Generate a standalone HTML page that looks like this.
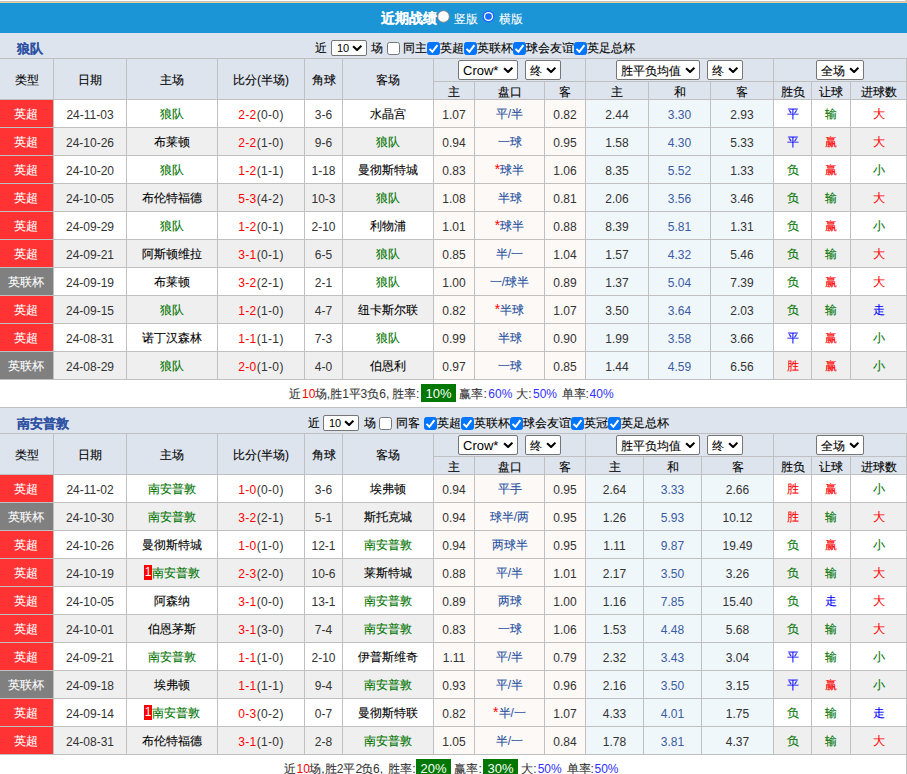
<!DOCTYPE html><html><head><meta charset="utf-8"><style>
*{margin:0;padding:0;box-sizing:border-box}
html,body{width:907px;height:774px;overflow:hidden;background:#fff}
body{position:relative;font-family:"Liberation Sans",sans-serif;font-size:12px;color:#333}
.r{position:absolute}
.c{position:absolute;display:flex;align-items:center;justify-content:center;white-space:nowrap;line-height:14px}
.sel{position:absolute;background:#fff;border:1px solid #767676;border-radius:2px;font-size:12px;color:#000}
.sel>span{position:absolute;left:4px;top:1px;height:18px;line-height:18px;white-space:nowrap}
.sel .chev{position:absolute;right:4px;top:5px}
.team{position:absolute;left:17px;height:25px;line-height:25px;font-weight:bold;font-size:13px;color:#2f52a4}
.opts{position:absolute;height:25px;line-height:25px;white-space:nowrap;font-size:12px;color:#333}
.ot{position:absolute;height:25px;line-height:25px;white-space:nowrap;font-size:12px;color:#000}
.nsel{position:absolute;width:36px;height:16px;border:1px solid #767676;border-radius:2px;background:#fff;line-height:14px;padding-left:5px;color:#000;font-size:11px}
.nsel .chev{position:absolute;right:4px;top:3px}
.cb{position:absolute;width:13px;height:13px;border:1px solid #767676;border-radius:2.5px;background:#fff}
.cb.on{background:#0075ff;border-color:#0075ff}
.cb svg{position:absolute;left:-1px;top:-1px}
.title{position:absolute;top:3px;height:30px;line-height:30px;color:#fff;font-weight:bold;font-size:14px;white-space:nowrap}
.tt{position:absolute;top:4px;height:30px;line-height:30px;color:#fff;font-size:12px;white-space:nowrap}
.rad{position:absolute}
.bd{display:inline-block;background:#ff0000;color:#fff;width:8px;height:15px;line-height:15px;text-align:center;font-weight:normal;font-size:12px}
.star{color:#ff0000;font-size:14px;position:relative;top:-1px}
.sum{position:absolute;height:27px;line-height:27px;white-space:nowrap;padding-top:1px}
.gb{position:absolute;background:#007700;color:#fff;width:35px;height:18px;line-height:18px;padding-top:1px;text-align:center;font-size:13px}
.rd{color:#ff0000}
.bl{color:#3030ff}
.k{-webkit-text-stroke:0.1px currentColor}
</style></head><body><div class="r" style="left:0px;top:1px;width:907px;height:1px;background:#c4c4c4"></div><div class="r" style="left:0px;top:2px;width:907px;height:1px;background:#e8ce98"></div><div class="r" style="left:0px;top:3px;width:907px;height:30px;background:#1c95d6"></div><div class="r" style="left:905px;top:0px;width:1px;height:2px;background:#c4c4c4"></div><div class="r" style="left:906px;top:0px;width:1px;height:3px;background:#e8ce98"></div><div class="title" style="left:381px"><span class="k">近期战绩</span></div><svg class="rad" style="left:437px;top:10px" width="13" height="13" viewBox="0 0 13 13"><circle cx="6.5" cy="6.5" r="5.8" fill="#fff" stroke="#8a8a8a" stroke-width="1"/></svg><div class="tt" style="left:454px"><span class="k">竖版</span></div><svg class="rad" style="left:482px;top:10px" width="13" height="13" viewBox="0 0 13 13"><circle cx="6.5" cy="6.5" r="6" fill="#1a6cff"/><circle cx="6.5" cy="6.5" r="4.6" fill="#fff"/><circle cx="6.5" cy="6.5" r="3.3" fill="#1a6cff"/></svg><div class="tt" style="left:499px"><span class="k">横版</span></div><div class="r" style="left:0px;top:33px;width:907px;height:25px;background:#dde4ed"></div><div class="team" style="top:36px"><span class="k">狼队</span></div><div class="ot" style="left:314.5px;top:36px"><span class="k">近</span></div><div class="nsel" style="left:331px;top:40px"><span>10</span><svg class="chev" width="10" height="7" viewBox="0 0 10 7"><path d="M1.1 2.2 L5.1 6 L9.4 1.7" fill="none" stroke="#000" stroke-width="2.1"/></svg></div><div class="ot" style="left:370.5px;top:36px"><span class="k">场</span></div><i style="left:387px;top:42px" class="cb"></i><div class="ot" style="left:403px;top:36px"><span class="k">同主</span></div><i style="left:427px;top:42px" class="cb on"><svg width="13" height="13" viewBox="0 0 13 13"><path d="M2.5 6.9 L5.4 9.8 L10.4 3.2" fill="none" stroke="#fff" stroke-width="2"/></svg></i><div class="ot" style="left:440px;top:36px"><span class="k">英超</span></div><i style="left:464px;top:42px" class="cb on"><svg width="13" height="13" viewBox="0 0 13 13"><path d="M2.5 6.9 L5.4 9.8 L10.4 3.2" fill="none" stroke="#fff" stroke-width="2"/></svg></i><div class="ot" style="left:477px;top:36px"><span class="k">英联杯</span></div><i style="left:513px;top:42px" class="cb on"><svg width="13" height="13" viewBox="0 0 13 13"><path d="M2.5 6.9 L5.4 9.8 L10.4 3.2" fill="none" stroke="#fff" stroke-width="2"/></svg></i><div class="ot" style="left:526px;top:36px"><span class="k">球会友谊</span></div><i style="left:574px;top:42px" class="cb on"><svg width="13" height="13" viewBox="0 0 13 13"><path d="M2.5 6.9 L5.4 9.8 L10.4 3.2" fill="none" stroke="#fff" stroke-width="2"/></svg></i><div class="ot" style="left:587px;top:36px"><span class="k">英足总杯</span></div><div class="r" style="left:0px;top:59px;width:906px;height:40px;background:#dde4ed"></div><div class="c" style="left:0px;top:59px;width:53px;height:40px;padding-top:2px;color:#000"><span class="k">类型</span></div><div class="c" style="left:54px;top:59px;width:72px;height:40px;padding-top:2px;color:#000"><span class="k">日期</span></div><div class="c" style="left:127px;top:59px;width:90px;height:40px;padding-top:2px;color:#000"><span class="k">主场</span></div><div class="c" style="left:218px;top:59px;width:86px;height:40px;padding-top:2px;color:#000"><span class="k">比分</span>(<span class="k">半场</span>)</div><div class="c" style="left:305px;top:59px;width:37px;height:40px;padding-top:2px;color:#000"><span class="k">角球</span></div><div class="c" style="left:343px;top:59px;width:90px;height:40px;padding-top:2px;color:#000"><span class="k">客场</span></div><div class="c" style="left:434px;top:82px;width:40px;height:17px;padding-top:2px;color:#000"><span class="k">主</span></div><div class="c" style="left:475px;top:82px;width:69px;height:17px;padding-top:2px;color:#000"><span class="k">盘口</span></div><div class="c" style="left:545px;top:82px;width:40px;height:17px;padding-top:2px;color:#000"><span class="k">客</span></div><div class="c" style="left:586px;top:82px;width:62px;height:17px;padding-top:2px;color:#000"><span class="k">主</span></div><div class="c" style="left:649px;top:82px;width:61px;height:17px;padding-top:2px;color:#000"><span class="k">和</span></div><div class="c" style="left:711px;top:82px;width:62px;height:17px;padding-top:2px;color:#000"><span class="k">客</span></div><div class="c" style="left:774px;top:82px;width:37px;height:17px;padding-top:2px;color:#000"><span class="k">胜负</span></div><div class="c" style="left:812px;top:82px;width:38px;height:17px;padding-top:2px;color:#000"><span class="k">让球</span></div><div class="c" style="left:851px;top:82px;width:55px;height:17px;padding-top:2px;color:#000"><span class="k">进球数</span></div><div class="r" style="left:0px;top:100px;width:53px;height:27px;background:#ff3333"></div><div class="c" style="left:-1px;top:100px;width:54px;height:27px;color:#fff"><span class="k">英超</span></div><div class="c" style="left:54px;top:100px;width:72px;height:27px;padding-top:2px">24-11-03</div><div class="c" style="left:127px;top:100px;width:90px;height:27px;"><span style="color:#007400"><span class="k">狼队</span></span></div><div class="c" style="left:218px;top:100px;width:86px;height:27px;padding-top:2px;letter-spacing:0.35px"><span style="color:#ff0000">2-2</span>(0-0)</div><div class="c" style="left:305px;top:100px;width:37px;height:27px;padding-top:2px">3-6</div><div class="c" style="left:343px;top:100px;width:90px;height:27px;"><span style="color:#000000"><span class="k">水晶宫</span></span></div><div class="r" style="left:434px;top:100px;width:40px;height:27px;background:#fdf9f6"></div><div class="c" style="left:434px;top:100px;width:40px;height:27px;padding-top:2px">1.07</div><div class="r" style="left:475px;top:100px;width:69px;height:27px;background:#fdf9f6"></div><div class="c" style="left:475px;top:100px;width:69px;height:27px;color:#1f4f9f"><span class="k">平</span>/<span class="k">半</span></div><div class="r" style="left:545px;top:100px;width:40px;height:27px;background:#fdf9f6"></div><div class="c" style="left:545px;top:100px;width:40px;height:27px;padding-top:2px">0.82</div><div class="r" style="left:586px;top:100px;width:62px;height:27px;background:#f0f7fb"></div><div class="c" style="left:586px;top:100px;width:62px;height:27px;padding-top:2px">2.44</div><div class="r" style="left:649px;top:100px;width:61px;height:27px;background:#f0f7fb"></div><div class="c" style="left:649px;top:100px;width:61px;height:27px;color:#3b5ca4;padding-top:2px">3.30</div><div class="r" style="left:711px;top:100px;width:62px;height:27px;background:#f0f7fb"></div><div class="c" style="left:711px;top:100px;width:62px;height:27px;padding-top:2px">2.93</div><div class="c" style="left:774px;top:100px;width:37px;height:27px;color:#0000ff"><span class="k">平</span></div><div class="c" style="left:812px;top:100px;width:38px;height:27px;color:#007400"><span class="k">输</span></div><div class="c" style="left:851px;top:100px;width:55px;height:27px;color:#ff0000"><span class="k">大</span></div><div class="r" style="left:0px;top:128px;width:53px;height:27px;background:#ff3333"></div><div class="c" style="left:-1px;top:128px;width:54px;height:27px;color:#fff"><span class="k">英超</span></div><div class="r" style="left:54px;top:128px;width:72px;height:27px;background:#efefef"></div><div class="c" style="left:54px;top:128px;width:72px;height:27px;padding-top:2px">24-10-26</div><div class="r" style="left:127px;top:128px;width:90px;height:27px;background:#efefef"></div><div class="c" style="left:127px;top:128px;width:90px;height:27px;"><span style="color:#000000"><span class="k">布莱顿</span></span></div><div class="r" style="left:218px;top:128px;width:86px;height:27px;background:#efefef"></div><div class="c" style="left:218px;top:128px;width:86px;height:27px;padding-top:2px;letter-spacing:0.35px"><span style="color:#ff0000">2-2</span>(1-0)</div><div class="r" style="left:305px;top:128px;width:37px;height:27px;background:#efefef"></div><div class="c" style="left:305px;top:128px;width:37px;height:27px;padding-top:2px">9-6</div><div class="r" style="left:343px;top:128px;width:90px;height:27px;background:#efefef"></div><div class="c" style="left:343px;top:128px;width:90px;height:27px;"><span style="color:#007400"><span class="k">狼队</span></span></div><div class="r" style="left:434px;top:128px;width:40px;height:27px;background:#fdf9f6"></div><div class="c" style="left:434px;top:128px;width:40px;height:27px;padding-top:2px">0.94</div><div class="r" style="left:475px;top:128px;width:69px;height:27px;background:#fdf9f6"></div><div class="c" style="left:475px;top:128px;width:69px;height:27px;color:#1f4f9f"><span class="k">一球</span></div><div class="r" style="left:545px;top:128px;width:40px;height:27px;background:#fdf9f6"></div><div class="c" style="left:545px;top:128px;width:40px;height:27px;padding-top:2px">0.95</div><div class="r" style="left:586px;top:128px;width:62px;height:27px;background:#f0f7fb"></div><div class="c" style="left:586px;top:128px;width:62px;height:27px;padding-top:2px">1.58</div><div class="r" style="left:649px;top:128px;width:61px;height:27px;background:#f0f7fb"></div><div class="c" style="left:649px;top:128px;width:61px;height:27px;color:#3b5ca4;padding-top:2px">4.30</div><div class="r" style="left:711px;top:128px;width:62px;height:27px;background:#f0f7fb"></div><div class="c" style="left:711px;top:128px;width:62px;height:27px;padding-top:2px">5.33</div><div class="r" style="left:774px;top:128px;width:37px;height:27px;background:#efefef"></div><div class="c" style="left:774px;top:128px;width:37px;height:27px;color:#0000ff"><span class="k">平</span></div><div class="r" style="left:812px;top:128px;width:38px;height:27px;background:#efefef"></div><div class="c" style="left:812px;top:128px;width:38px;height:27px;color:#ff0000"><span class="k">赢</span></div><div class="r" style="left:851px;top:128px;width:55px;height:27px;background:#efefef"></div><div class="c" style="left:851px;top:128px;width:55px;height:27px;color:#ff0000"><span class="k">大</span></div><div class="r" style="left:0px;top:156px;width:53px;height:27px;background:#ff3333"></div><div class="c" style="left:-1px;top:156px;width:54px;height:27px;color:#fff"><span class="k">英超</span></div><div class="c" style="left:54px;top:156px;width:72px;height:27px;padding-top:2px">24-10-20</div><div class="c" style="left:127px;top:156px;width:90px;height:27px;"><span style="color:#007400"><span class="k">狼队</span></span></div><div class="c" style="left:218px;top:156px;width:86px;height:27px;padding-top:2px;letter-spacing:0.35px"><span style="color:#ff0000">1-2</span>(1-1)</div><div class="c" style="left:305px;top:156px;width:37px;height:27px;padding-top:2px">1-18</div><div class="c" style="left:343px;top:156px;width:90px;height:27px;"><span style="color:#000000"><span class="k">曼彻斯特城</span></span></div><div class="r" style="left:434px;top:156px;width:40px;height:27px;background:#fdf9f6"></div><div class="c" style="left:434px;top:156px;width:40px;height:27px;padding-top:2px">0.83</div><div class="r" style="left:475px;top:156px;width:69px;height:27px;background:#fdf9f6"></div><div class="c" style="left:475px;top:156px;width:69px;height:27px;color:#1f4f9f"><span class="star">*</span><span class="k">球半</span></div><div class="r" style="left:545px;top:156px;width:40px;height:27px;background:#fdf9f6"></div><div class="c" style="left:545px;top:156px;width:40px;height:27px;padding-top:2px">1.06</div><div class="r" style="left:586px;top:156px;width:62px;height:27px;background:#f0f7fb"></div><div class="c" style="left:586px;top:156px;width:62px;height:27px;padding-top:2px">8.35</div><div class="r" style="left:649px;top:156px;width:61px;height:27px;background:#f0f7fb"></div><div class="c" style="left:649px;top:156px;width:61px;height:27px;color:#3b5ca4;padding-top:2px">5.52</div><div class="r" style="left:711px;top:156px;width:62px;height:27px;background:#f0f7fb"></div><div class="c" style="left:711px;top:156px;width:62px;height:27px;padding-top:2px">1.33</div><div class="c" style="left:774px;top:156px;width:37px;height:27px;color:#007400"><span class="k">负</span></div><div class="c" style="left:812px;top:156px;width:38px;height:27px;color:#ff0000"><span class="k">赢</span></div><div class="c" style="left:851px;top:156px;width:55px;height:27px;color:#007400"><span class="k">小</span></div><div class="r" style="left:0px;top:184px;width:53px;height:27px;background:#ff3333"></div><div class="c" style="left:-1px;top:184px;width:54px;height:27px;color:#fff"><span class="k">英超</span></div><div class="r" style="left:54px;top:184px;width:72px;height:27px;background:#efefef"></div><div class="c" style="left:54px;top:184px;width:72px;height:27px;padding-top:2px">24-10-05</div><div class="r" style="left:127px;top:184px;width:90px;height:27px;background:#efefef"></div><div class="c" style="left:127px;top:184px;width:90px;height:27px;"><span style="color:#000000"><span class="k">布伦特福德</span></span></div><div class="r" style="left:218px;top:184px;width:86px;height:27px;background:#efefef"></div><div class="c" style="left:218px;top:184px;width:86px;height:27px;padding-top:2px;letter-spacing:0.35px"><span style="color:#ff0000">5-3</span>(4-2)</div><div class="r" style="left:305px;top:184px;width:37px;height:27px;background:#efefef"></div><div class="c" style="left:305px;top:184px;width:37px;height:27px;padding-top:2px">10-3</div><div class="r" style="left:343px;top:184px;width:90px;height:27px;background:#efefef"></div><div class="c" style="left:343px;top:184px;width:90px;height:27px;"><span style="color:#007400"><span class="k">狼队</span></span></div><div class="r" style="left:434px;top:184px;width:40px;height:27px;background:#fdf9f6"></div><div class="c" style="left:434px;top:184px;width:40px;height:27px;padding-top:2px">1.08</div><div class="r" style="left:475px;top:184px;width:69px;height:27px;background:#fdf9f6"></div><div class="c" style="left:475px;top:184px;width:69px;height:27px;color:#1f4f9f"><span class="k">半球</span></div><div class="r" style="left:545px;top:184px;width:40px;height:27px;background:#fdf9f6"></div><div class="c" style="left:545px;top:184px;width:40px;height:27px;padding-top:2px">0.81</div><div class="r" style="left:586px;top:184px;width:62px;height:27px;background:#f0f7fb"></div><div class="c" style="left:586px;top:184px;width:62px;height:27px;padding-top:2px">2.06</div><div class="r" style="left:649px;top:184px;width:61px;height:27px;background:#f0f7fb"></div><div class="c" style="left:649px;top:184px;width:61px;height:27px;color:#3b5ca4;padding-top:2px">3.56</div><div class="r" style="left:711px;top:184px;width:62px;height:27px;background:#f0f7fb"></div><div class="c" style="left:711px;top:184px;width:62px;height:27px;padding-top:2px">3.46</div><div class="r" style="left:774px;top:184px;width:37px;height:27px;background:#efefef"></div><div class="c" style="left:774px;top:184px;width:37px;height:27px;color:#007400"><span class="k">负</span></div><div class="r" style="left:812px;top:184px;width:38px;height:27px;background:#efefef"></div><div class="c" style="left:812px;top:184px;width:38px;height:27px;color:#007400"><span class="k">输</span></div><div class="r" style="left:851px;top:184px;width:55px;height:27px;background:#efefef"></div><div class="c" style="left:851px;top:184px;width:55px;height:27px;color:#ff0000"><span class="k">大</span></div><div class="r" style="left:0px;top:212px;width:53px;height:27px;background:#ff3333"></div><div class="c" style="left:-1px;top:212px;width:54px;height:27px;color:#fff"><span class="k">英超</span></div><div class="c" style="left:54px;top:212px;width:72px;height:27px;padding-top:2px">24-09-29</div><div class="c" style="left:127px;top:212px;width:90px;height:27px;"><span style="color:#007400"><span class="k">狼队</span></span></div><div class="c" style="left:218px;top:212px;width:86px;height:27px;padding-top:2px;letter-spacing:0.35px"><span style="color:#ff0000">1-2</span>(0-1)</div><div class="c" style="left:305px;top:212px;width:37px;height:27px;padding-top:2px">2-10</div><div class="c" style="left:343px;top:212px;width:90px;height:27px;"><span style="color:#000000"><span class="k">利物浦</span></span></div><div class="r" style="left:434px;top:212px;width:40px;height:27px;background:#fdf9f6"></div><div class="c" style="left:434px;top:212px;width:40px;height:27px;padding-top:2px">1.01</div><div class="r" style="left:475px;top:212px;width:69px;height:27px;background:#fdf9f6"></div><div class="c" style="left:475px;top:212px;width:69px;height:27px;color:#1f4f9f"><span class="star">*</span><span class="k">球半</span></div><div class="r" style="left:545px;top:212px;width:40px;height:27px;background:#fdf9f6"></div><div class="c" style="left:545px;top:212px;width:40px;height:27px;padding-top:2px">0.88</div><div class="r" style="left:586px;top:212px;width:62px;height:27px;background:#f0f7fb"></div><div class="c" style="left:586px;top:212px;width:62px;height:27px;padding-top:2px">8.39</div><div class="r" style="left:649px;top:212px;width:61px;height:27px;background:#f0f7fb"></div><div class="c" style="left:649px;top:212px;width:61px;height:27px;color:#3b5ca4;padding-top:2px">5.81</div><div class="r" style="left:711px;top:212px;width:62px;height:27px;background:#f0f7fb"></div><div class="c" style="left:711px;top:212px;width:62px;height:27px;padding-top:2px">1.31</div><div class="c" style="left:774px;top:212px;width:37px;height:27px;color:#007400"><span class="k">负</span></div><div class="c" style="left:812px;top:212px;width:38px;height:27px;color:#ff0000"><span class="k">赢</span></div><div class="c" style="left:851px;top:212px;width:55px;height:27px;color:#007400"><span class="k">小</span></div><div class="r" style="left:0px;top:240px;width:53px;height:27px;background:#ff3333"></div><div class="c" style="left:-1px;top:240px;width:54px;height:27px;color:#fff"><span class="k">英超</span></div><div class="r" style="left:54px;top:240px;width:72px;height:27px;background:#efefef"></div><div class="c" style="left:54px;top:240px;width:72px;height:27px;padding-top:2px">24-09-21</div><div class="r" style="left:127px;top:240px;width:90px;height:27px;background:#efefef"></div><div class="c" style="left:127px;top:240px;width:90px;height:27px;"><span style="color:#000000"><span class="k">阿斯顿维拉</span></span></div><div class="r" style="left:218px;top:240px;width:86px;height:27px;background:#efefef"></div><div class="c" style="left:218px;top:240px;width:86px;height:27px;padding-top:2px;letter-spacing:0.35px"><span style="color:#ff0000">3-1</span>(0-1)</div><div class="r" style="left:305px;top:240px;width:37px;height:27px;background:#efefef"></div><div class="c" style="left:305px;top:240px;width:37px;height:27px;padding-top:2px">6-5</div><div class="r" style="left:343px;top:240px;width:90px;height:27px;background:#efefef"></div><div class="c" style="left:343px;top:240px;width:90px;height:27px;"><span style="color:#007400"><span class="k">狼队</span></span></div><div class="r" style="left:434px;top:240px;width:40px;height:27px;background:#fdf9f6"></div><div class="c" style="left:434px;top:240px;width:40px;height:27px;padding-top:2px">0.85</div><div class="r" style="left:475px;top:240px;width:69px;height:27px;background:#fdf9f6"></div><div class="c" style="left:475px;top:240px;width:69px;height:27px;color:#1f4f9f"><span class="k">半</span>/<span class="k">一</span></div><div class="r" style="left:545px;top:240px;width:40px;height:27px;background:#fdf9f6"></div><div class="c" style="left:545px;top:240px;width:40px;height:27px;padding-top:2px">1.04</div><div class="r" style="left:586px;top:240px;width:62px;height:27px;background:#f0f7fb"></div><div class="c" style="left:586px;top:240px;width:62px;height:27px;padding-top:2px">1.57</div><div class="r" style="left:649px;top:240px;width:61px;height:27px;background:#f0f7fb"></div><div class="c" style="left:649px;top:240px;width:61px;height:27px;color:#3b5ca4;padding-top:2px">4.32</div><div class="r" style="left:711px;top:240px;width:62px;height:27px;background:#f0f7fb"></div><div class="c" style="left:711px;top:240px;width:62px;height:27px;padding-top:2px">5.46</div><div class="r" style="left:774px;top:240px;width:37px;height:27px;background:#efefef"></div><div class="c" style="left:774px;top:240px;width:37px;height:27px;color:#007400"><span class="k">负</span></div><div class="r" style="left:812px;top:240px;width:38px;height:27px;background:#efefef"></div><div class="c" style="left:812px;top:240px;width:38px;height:27px;color:#007400"><span class="k">输</span></div><div class="r" style="left:851px;top:240px;width:55px;height:27px;background:#efefef"></div><div class="c" style="left:851px;top:240px;width:55px;height:27px;color:#ff0000"><span class="k">大</span></div><div class="r" style="left:0px;top:268px;width:53px;height:27px;background:#808080"></div><div class="c" style="left:-1px;top:268px;width:54px;height:27px;color:#fff"><span class="k">英联杯</span></div><div class="c" style="left:54px;top:268px;width:72px;height:27px;padding-top:2px">24-09-19</div><div class="c" style="left:127px;top:268px;width:90px;height:27px;"><span style="color:#000000"><span class="k">布莱顿</span></span></div><div class="c" style="left:218px;top:268px;width:86px;height:27px;padding-top:2px;letter-spacing:0.35px"><span style="color:#ff0000">3-2</span>(2-1)</div><div class="c" style="left:305px;top:268px;width:37px;height:27px;padding-top:2px">2-1</div><div class="c" style="left:343px;top:268px;width:90px;height:27px;"><span style="color:#007400"><span class="k">狼队</span></span></div><div class="r" style="left:434px;top:268px;width:40px;height:27px;background:#fdf9f6"></div><div class="c" style="left:434px;top:268px;width:40px;height:27px;padding-top:2px">1.00</div><div class="r" style="left:475px;top:268px;width:69px;height:27px;background:#fdf9f6"></div><div class="c" style="left:475px;top:268px;width:69px;height:27px;color:#1f4f9f"><span class="k">一</span>/<span class="k">球半</span></div><div class="r" style="left:545px;top:268px;width:40px;height:27px;background:#fdf9f6"></div><div class="c" style="left:545px;top:268px;width:40px;height:27px;padding-top:2px">0.89</div><div class="r" style="left:586px;top:268px;width:62px;height:27px;background:#f0f7fb"></div><div class="c" style="left:586px;top:268px;width:62px;height:27px;padding-top:2px">1.37</div><div class="r" style="left:649px;top:268px;width:61px;height:27px;background:#f0f7fb"></div><div class="c" style="left:649px;top:268px;width:61px;height:27px;color:#3b5ca4;padding-top:2px">5.04</div><div class="r" style="left:711px;top:268px;width:62px;height:27px;background:#f0f7fb"></div><div class="c" style="left:711px;top:268px;width:62px;height:27px;padding-top:2px">7.39</div><div class="c" style="left:774px;top:268px;width:37px;height:27px;color:#007400"><span class="k">负</span></div><div class="c" style="left:812px;top:268px;width:38px;height:27px;color:#ff0000"><span class="k">赢</span></div><div class="c" style="left:851px;top:268px;width:55px;height:27px;color:#ff0000"><span class="k">大</span></div><div class="r" style="left:0px;top:296px;width:53px;height:27px;background:#ff3333"></div><div class="c" style="left:-1px;top:296px;width:54px;height:27px;color:#fff"><span class="k">英超</span></div><div class="r" style="left:54px;top:296px;width:72px;height:27px;background:#efefef"></div><div class="c" style="left:54px;top:296px;width:72px;height:27px;padding-top:2px">24-09-15</div><div class="r" style="left:127px;top:296px;width:90px;height:27px;background:#efefef"></div><div class="c" style="left:127px;top:296px;width:90px;height:27px;"><span style="color:#007400"><span class="k">狼队</span></span></div><div class="r" style="left:218px;top:296px;width:86px;height:27px;background:#efefef"></div><div class="c" style="left:218px;top:296px;width:86px;height:27px;padding-top:2px;letter-spacing:0.35px"><span style="color:#ff0000">1-2</span>(1-0)</div><div class="r" style="left:305px;top:296px;width:37px;height:27px;background:#efefef"></div><div class="c" style="left:305px;top:296px;width:37px;height:27px;padding-top:2px">4-7</div><div class="r" style="left:343px;top:296px;width:90px;height:27px;background:#efefef"></div><div class="c" style="left:343px;top:296px;width:90px;height:27px;"><span style="color:#000000"><span class="k">纽卡斯尔联</span></span></div><div class="r" style="left:434px;top:296px;width:40px;height:27px;background:#fdf9f6"></div><div class="c" style="left:434px;top:296px;width:40px;height:27px;padding-top:2px">0.82</div><div class="r" style="left:475px;top:296px;width:69px;height:27px;background:#fdf9f6"></div><div class="c" style="left:475px;top:296px;width:69px;height:27px;color:#1f4f9f"><span class="star">*</span><span class="k">半球</span></div><div class="r" style="left:545px;top:296px;width:40px;height:27px;background:#fdf9f6"></div><div class="c" style="left:545px;top:296px;width:40px;height:27px;padding-top:2px">1.07</div><div class="r" style="left:586px;top:296px;width:62px;height:27px;background:#f0f7fb"></div><div class="c" style="left:586px;top:296px;width:62px;height:27px;padding-top:2px">3.50</div><div class="r" style="left:649px;top:296px;width:61px;height:27px;background:#f0f7fb"></div><div class="c" style="left:649px;top:296px;width:61px;height:27px;color:#3b5ca4;padding-top:2px">3.64</div><div class="r" style="left:711px;top:296px;width:62px;height:27px;background:#f0f7fb"></div><div class="c" style="left:711px;top:296px;width:62px;height:27px;padding-top:2px">2.03</div><div class="r" style="left:774px;top:296px;width:37px;height:27px;background:#efefef"></div><div class="c" style="left:774px;top:296px;width:37px;height:27px;color:#007400"><span class="k">负</span></div><div class="r" style="left:812px;top:296px;width:38px;height:27px;background:#efefef"></div><div class="c" style="left:812px;top:296px;width:38px;height:27px;color:#007400"><span class="k">输</span></div><div class="r" style="left:851px;top:296px;width:55px;height:27px;background:#efefef"></div><div class="c" style="left:851px;top:296px;width:55px;height:27px;color:#0000ff"><span class="k">走</span></div><div class="r" style="left:0px;top:324px;width:53px;height:27px;background:#ff3333"></div><div class="c" style="left:-1px;top:324px;width:54px;height:27px;color:#fff"><span class="k">英超</span></div><div class="c" style="left:54px;top:324px;width:72px;height:27px;padding-top:2px">24-08-31</div><div class="c" style="left:127px;top:324px;width:90px;height:27px;"><span style="color:#000000"><span class="k">诺丁汉森林</span></span></div><div class="c" style="left:218px;top:324px;width:86px;height:27px;padding-top:2px;letter-spacing:0.35px"><span style="color:#ff0000">1-1</span>(1-1)</div><div class="c" style="left:305px;top:324px;width:37px;height:27px;padding-top:2px">7-3</div><div class="c" style="left:343px;top:324px;width:90px;height:27px;"><span style="color:#007400"><span class="k">狼队</span></span></div><div class="r" style="left:434px;top:324px;width:40px;height:27px;background:#fdf9f6"></div><div class="c" style="left:434px;top:324px;width:40px;height:27px;padding-top:2px">0.99</div><div class="r" style="left:475px;top:324px;width:69px;height:27px;background:#fdf9f6"></div><div class="c" style="left:475px;top:324px;width:69px;height:27px;color:#1f4f9f"><span class="k">半球</span></div><div class="r" style="left:545px;top:324px;width:40px;height:27px;background:#fdf9f6"></div><div class="c" style="left:545px;top:324px;width:40px;height:27px;padding-top:2px">0.90</div><div class="r" style="left:586px;top:324px;width:62px;height:27px;background:#f0f7fb"></div><div class="c" style="left:586px;top:324px;width:62px;height:27px;padding-top:2px">1.99</div><div class="r" style="left:649px;top:324px;width:61px;height:27px;background:#f0f7fb"></div><div class="c" style="left:649px;top:324px;width:61px;height:27px;color:#3b5ca4;padding-top:2px">3.58</div><div class="r" style="left:711px;top:324px;width:62px;height:27px;background:#f0f7fb"></div><div class="c" style="left:711px;top:324px;width:62px;height:27px;padding-top:2px">3.66</div><div class="c" style="left:774px;top:324px;width:37px;height:27px;color:#0000ff"><span class="k">平</span></div><div class="c" style="left:812px;top:324px;width:38px;height:27px;color:#ff0000"><span class="k">赢</span></div><div class="c" style="left:851px;top:324px;width:55px;height:27px;color:#007400"><span class="k">小</span></div><div class="r" style="left:0px;top:352px;width:53px;height:27px;background:#808080"></div><div class="c" style="left:-1px;top:352px;width:54px;height:27px;color:#fff"><span class="k">英联杯</span></div><div class="r" style="left:54px;top:352px;width:72px;height:27px;background:#efefef"></div><div class="c" style="left:54px;top:352px;width:72px;height:27px;padding-top:2px">24-08-29</div><div class="r" style="left:127px;top:352px;width:90px;height:27px;background:#efefef"></div><div class="c" style="left:127px;top:352px;width:90px;height:27px;"><span style="color:#007400"><span class="k">狼队</span></span></div><div class="r" style="left:218px;top:352px;width:86px;height:27px;background:#efefef"></div><div class="c" style="left:218px;top:352px;width:86px;height:27px;padding-top:2px;letter-spacing:0.35px"><span style="color:#ff0000">2-0</span>(1-0)</div><div class="r" style="left:305px;top:352px;width:37px;height:27px;background:#efefef"></div><div class="c" style="left:305px;top:352px;width:37px;height:27px;padding-top:2px">4-0</div><div class="r" style="left:343px;top:352px;width:90px;height:27px;background:#efefef"></div><div class="c" style="left:343px;top:352px;width:90px;height:27px;"><span style="color:#000000"><span class="k">伯恩利</span></span></div><div class="r" style="left:434px;top:352px;width:40px;height:27px;background:#fdf9f6"></div><div class="c" style="left:434px;top:352px;width:40px;height:27px;padding-top:2px">0.97</div><div class="r" style="left:475px;top:352px;width:69px;height:27px;background:#fdf9f6"></div><div class="c" style="left:475px;top:352px;width:69px;height:27px;color:#1f4f9f"><span class="k">一球</span></div><div class="r" style="left:545px;top:352px;width:40px;height:27px;background:#fdf9f6"></div><div class="c" style="left:545px;top:352px;width:40px;height:27px;padding-top:2px">0.85</div><div class="r" style="left:586px;top:352px;width:62px;height:27px;background:#f0f7fb"></div><div class="c" style="left:586px;top:352px;width:62px;height:27px;padding-top:2px">1.44</div><div class="r" style="left:649px;top:352px;width:61px;height:27px;background:#f0f7fb"></div><div class="c" style="left:649px;top:352px;width:61px;height:27px;color:#3b5ca4;padding-top:2px">4.59</div><div class="r" style="left:711px;top:352px;width:62px;height:27px;background:#f0f7fb"></div><div class="c" style="left:711px;top:352px;width:62px;height:27px;padding-top:2px">6.56</div><div class="r" style="left:774px;top:352px;width:37px;height:27px;background:#efefef"></div><div class="c" style="left:774px;top:352px;width:37px;height:27px;color:#ff0000"><span class="k">胜</span></div><div class="r" style="left:812px;top:352px;width:38px;height:27px;background:#efefef"></div><div class="c" style="left:812px;top:352px;width:38px;height:27px;color:#ff0000"><span class="k">赢</span></div><div class="r" style="left:851px;top:352px;width:55px;height:27px;background:#efefef"></div><div class="c" style="left:851px;top:352px;width:55px;height:27px;color:#007400"><span class="k">小</span></div><div class="r" style="left:0px;top:58px;width:907px;height:1px;background:#c0c0c0"></div><div class="r" style="left:433px;top:81px;width:474px;height:1px;background:#c0c0c0"></div><div class="r" style="left:0px;top:99px;width:907px;height:1px;background:#c0c0c0"></div><div class="r" style="left:0px;top:127px;width:907px;height:1px;background:#c0c0c0"></div><div class="r" style="left:0px;top:155px;width:907px;height:1px;background:#c0c0c0"></div><div class="r" style="left:0px;top:183px;width:907px;height:1px;background:#c0c0c0"></div><div class="r" style="left:0px;top:211px;width:907px;height:1px;background:#c0c0c0"></div><div class="r" style="left:0px;top:239px;width:907px;height:1px;background:#c0c0c0"></div><div class="r" style="left:0px;top:267px;width:907px;height:1px;background:#c0c0c0"></div><div class="r" style="left:0px;top:295px;width:907px;height:1px;background:#c0c0c0"></div><div class="r" style="left:0px;top:323px;width:907px;height:1px;background:#c0c0c0"></div><div class="r" style="left:0px;top:351px;width:907px;height:1px;background:#c0c0c0"></div><div class="r" style="left:0px;top:379px;width:907px;height:1px;background:#c0c0c0"></div><div class="r" style="left:53px;top:58px;width:1px;height:321px;background:#c0c0c0"></div><div class="r" style="left:126px;top:58px;width:1px;height:321px;background:#c0c0c0"></div><div class="r" style="left:217px;top:58px;width:1px;height:321px;background:#c0c0c0"></div><div class="r" style="left:304px;top:58px;width:1px;height:321px;background:#c0c0c0"></div><div class="r" style="left:342px;top:58px;width:1px;height:321px;background:#c0c0c0"></div><div class="r" style="left:433px;top:58px;width:1px;height:321px;background:#c0c0c0"></div><div class="r" style="left:474px;top:58px;width:1px;height:321px;background:#c0c0c0"></div><div class="r" style="left:544px;top:58px;width:1px;height:321px;background:#c0c0c0"></div><div class="r" style="left:585px;top:58px;width:1px;height:321px;background:#c0c0c0"></div><div class="r" style="left:648px;top:58px;width:1px;height:321px;background:#c0c0c0"></div><div class="r" style="left:710px;top:58px;width:1px;height:321px;background:#c0c0c0"></div><div class="r" style="left:773px;top:58px;width:1px;height:321px;background:#c0c0c0"></div><div class="r" style="left:811px;top:58px;width:1px;height:321px;background:#c0c0c0"></div><div class="r" style="left:850px;top:58px;width:1px;height:321px;background:#c0c0c0"></div><div class="r" style="left:906px;top:58px;width:1px;height:349px;background:#c0c0c0"></div><div class="r" style="left:0px;top:407px;width:907px;height:1px;background:#c0c0c0"></div><div class="r" style="left:474px;top:59px;width:1px;height:22px;background:#dde4ed"></div><div class="r" style="left:544px;top:59px;width:1px;height:22px;background:#dde4ed"></div><div class="r" style="left:648px;top:59px;width:1px;height:22px;background:#dde4ed"></div><div class="r" style="left:710px;top:59px;width:1px;height:22px;background:#dde4ed"></div><div class="r" style="left:811px;top:59px;width:1px;height:22px;background:#dde4ed"></div><div class="r" style="left:850px;top:59px;width:1px;height:22px;background:#dde4ed"></div><div class="sel" style="left:458px;top:60px;width:60px;height:20px"><span style="font-size:13px">Crow*</span><svg class="chev" width="10" height="7" viewBox="0 0 10 7"><path d="M1.1 2.2 L5.1 6 L9.4 1.7" fill="none" stroke="#000" stroke-width="2.1"/></svg></div><div class="sel" style="left:525px;top:60px;width:36px;height:20px"><span style="font-size:12px"><span class="k">终</span></span><svg class="chev" width="10" height="7" viewBox="0 0 10 7"><path d="M1.1 2.2 L5.1 6 L9.4 1.7" fill="none" stroke="#000" stroke-width="2.1"/></svg></div><div class="sel" style="left:616px;top:60px;width:84px;height:20px"><span style="font-size:12px"><span class="k">胜平负均值</span></span><svg class="chev" width="10" height="7" viewBox="0 0 10 7"><path d="M1.1 2.2 L5.1 6 L9.4 1.7" fill="none" stroke="#000" stroke-width="2.1"/></svg></div><div class="sel" style="left:707px;top:60px;width:36px;height:20px"><span style="font-size:12px"><span class="k">终</span></span><svg class="chev" width="10" height="7" viewBox="0 0 10 7"><path d="M1.1 2.2 L5.1 6 L9.4 1.7" fill="none" stroke="#000" stroke-width="2.1"/></svg></div><div class="sel" style="left:816px;top:60px;width:48px;height:20px"><span style="font-size:12px"><span class="k">全场</span></span><svg class="chev" width="10" height="7" viewBox="0 0 10 7"><path d="M1.1 2.2 L5.1 6 L9.4 1.7" fill="none" stroke="#000" stroke-width="2.1"/></svg></div><div class="sum " style="left:288.7px;top:380px"><span class="k">近</span></div><div class="sum rd" style="left:302px;top:380px">10</div><div class="sum " style="left:314.8px;top:380px"><span class="k">场</span>,<span class="k">胜</span></div><div class="sum " style="left:342.3px;top:380px">1</div><div class="sum " style="left:348.5px;top:380px"><span class="k">平</span></div><div class="sum " style="left:360.4px;top:380px">3</div><div class="sum " style="left:367.2px;top:380px"><span class="k">负</span></div><div class="sum " style="left:379.3px;top:380px">6,</div><div class="sum " style="left:392.1px;top:380px"><span class="k">胜率</span>:</div><div class="gb" style="left:421px;top:384px">10%</div><div class="sum " style="left:459.4px;top:380px"><span class="k">赢率</span>:</div><div class="sum bl" style="left:488.3px;top:380px">60%</div><div class="sum " style="left:516.3px;top:380px"><span class="k">大</span>:</div><div class="sum bl" style="left:533px;top:380px">50%</div><div class="sum " style="left:561.5px;top:380px"><span class="k">单率</span>:</div><div class="sum bl" style="left:589.6px;top:380px">40%</div><div class="r" style="left:0px;top:408px;width:907px;height:25px;background:#dde4ed"></div><div class="team" style="top:411px"><span class="k">南安普敦</span></div><div class="ot" style="left:307.5px;top:411px"><span class="k">近</span></div><div class="nsel" style="left:323px;top:415px"><span>10</span><svg class="chev" width="10" height="7" viewBox="0 0 10 7"><path d="M1.1 2.2 L5.1 6 L9.4 1.7" fill="none" stroke="#000" stroke-width="2.1"/></svg></div><div class="ot" style="left:363.5px;top:411px"><span class="k">场</span></div><i style="left:379px;top:417px" class="cb"></i><div class="ot" style="left:396px;top:411px"><span class="k">同客</span></div><i style="left:424px;top:417px" class="cb on"><svg width="13" height="13" viewBox="0 0 13 13"><path d="M2.5 6.9 L5.4 9.8 L10.4 3.2" fill="none" stroke="#fff" stroke-width="2"/></svg></i><div class="ot" style="left:437px;top:411px"><span class="k">英超</span></div><i style="left:461px;top:417px" class="cb on"><svg width="13" height="13" viewBox="0 0 13 13"><path d="M2.5 6.9 L5.4 9.8 L10.4 3.2" fill="none" stroke="#fff" stroke-width="2"/></svg></i><div class="ot" style="left:474px;top:411px"><span class="k">英联杯</span></div><i style="left:510px;top:417px" class="cb on"><svg width="13" height="13" viewBox="0 0 13 13"><path d="M2.5 6.9 L5.4 9.8 L10.4 3.2" fill="none" stroke="#fff" stroke-width="2"/></svg></i><div class="ot" style="left:523px;top:411px"><span class="k">球会友谊</span></div><i style="left:571px;top:417px" class="cb on"><svg width="13" height="13" viewBox="0 0 13 13"><path d="M2.5 6.9 L5.4 9.8 L10.4 3.2" fill="none" stroke="#fff" stroke-width="2"/></svg></i><div class="ot" style="left:584px;top:411px"><span class="k">英冠</span></div><i style="left:608px;top:417px" class="cb on"><svg width="13" height="13" viewBox="0 0 13 13"><path d="M2.5 6.9 L5.4 9.8 L10.4 3.2" fill="none" stroke="#fff" stroke-width="2"/></svg></i><div class="ot" style="left:621px;top:411px"><span class="k">英足总杯</span></div><div class="r" style="left:0px;top:434px;width:906px;height:40px;background:#dde4ed"></div><div class="c" style="left:0px;top:434px;width:53px;height:40px;padding-top:2px;color:#000"><span class="k">类型</span></div><div class="c" style="left:54px;top:434px;width:72px;height:40px;padding-top:2px;color:#000"><span class="k">日期</span></div><div class="c" style="left:127px;top:434px;width:90px;height:40px;padding-top:2px;color:#000"><span class="k">主场</span></div><div class="c" style="left:218px;top:434px;width:86px;height:40px;padding-top:2px;color:#000"><span class="k">比分</span>(<span class="k">半场</span>)</div><div class="c" style="left:305px;top:434px;width:37px;height:40px;padding-top:2px;color:#000"><span class="k">角球</span></div><div class="c" style="left:343px;top:434px;width:90px;height:40px;padding-top:2px;color:#000"><span class="k">客场</span></div><div class="c" style="left:434px;top:457px;width:40px;height:17px;padding-top:2px;color:#000"><span class="k">主</span></div><div class="c" style="left:475px;top:457px;width:69px;height:17px;padding-top:2px;color:#000"><span class="k">盘口</span></div><div class="c" style="left:545px;top:457px;width:40px;height:17px;padding-top:2px;color:#000"><span class="k">客</span></div><div class="c" style="left:586px;top:457px;width:57px;height:17px;padding-top:2px;color:#000"><span class="k">主</span></div><div class="c" style="left:644px;top:457px;width:57px;height:17px;padding-top:2px;color:#000"><span class="k">和</span></div><div class="c" style="left:702px;top:457px;width:71px;height:17px;padding-top:2px;color:#000"><span class="k">客</span></div><div class="c" style="left:774px;top:457px;width:37px;height:17px;padding-top:2px;color:#000"><span class="k">胜负</span></div><div class="c" style="left:812px;top:457px;width:38px;height:17px;padding-top:2px;color:#000"><span class="k">让球</span></div><div class="c" style="left:851px;top:457px;width:55px;height:17px;padding-top:2px;color:#000"><span class="k">进球数</span></div><div class="r" style="left:0px;top:475px;width:53px;height:27px;background:#ff3333"></div><div class="c" style="left:-1px;top:475px;width:54px;height:27px;color:#fff"><span class="k">英超</span></div><div class="c" style="left:54px;top:475px;width:72px;height:27px;padding-top:2px">24-11-02</div><div class="c" style="left:127px;top:475px;width:90px;height:27px;"><span style="color:#007400"><span class="k">南安普敦</span></span></div><div class="c" style="left:218px;top:475px;width:86px;height:27px;padding-top:2px;letter-spacing:0.35px"><span style="color:#ff0000">1-0</span>(0-0)</div><div class="c" style="left:305px;top:475px;width:37px;height:27px;padding-top:2px">3-6</div><div class="c" style="left:343px;top:475px;width:90px;height:27px;"><span style="color:#000000"><span class="k">埃弗顿</span></span></div><div class="r" style="left:434px;top:475px;width:40px;height:27px;background:#fdf9f6"></div><div class="c" style="left:434px;top:475px;width:40px;height:27px;padding-top:2px">0.94</div><div class="r" style="left:475px;top:475px;width:69px;height:27px;background:#fdf9f6"></div><div class="c" style="left:475px;top:475px;width:69px;height:27px;color:#1f4f9f"><span class="k">平手</span></div><div class="r" style="left:545px;top:475px;width:40px;height:27px;background:#fdf9f6"></div><div class="c" style="left:545px;top:475px;width:40px;height:27px;padding-top:2px">0.95</div><div class="r" style="left:586px;top:475px;width:57px;height:27px;background:#f0f7fb"></div><div class="c" style="left:586px;top:475px;width:57px;height:27px;padding-top:2px">2.64</div><div class="r" style="left:644px;top:475px;width:57px;height:27px;background:#f0f7fb"></div><div class="c" style="left:644px;top:475px;width:57px;height:27px;color:#3b5ca4;padding-top:2px">3.33</div><div class="r" style="left:702px;top:475px;width:71px;height:27px;background:#f0f7fb"></div><div class="c" style="left:702px;top:475px;width:71px;height:27px;padding-top:2px">2.66</div><div class="c" style="left:774px;top:475px;width:37px;height:27px;color:#ff0000"><span class="k">胜</span></div><div class="c" style="left:812px;top:475px;width:38px;height:27px;color:#ff0000"><span class="k">赢</span></div><div class="c" style="left:851px;top:475px;width:55px;height:27px;color:#007400"><span class="k">小</span></div><div class="r" style="left:0px;top:503px;width:53px;height:27px;background:#808080"></div><div class="c" style="left:-1px;top:503px;width:54px;height:27px;color:#fff"><span class="k">英联杯</span></div><div class="r" style="left:54px;top:503px;width:72px;height:27px;background:#efefef"></div><div class="c" style="left:54px;top:503px;width:72px;height:27px;padding-top:2px">24-10-30</div><div class="r" style="left:127px;top:503px;width:90px;height:27px;background:#efefef"></div><div class="c" style="left:127px;top:503px;width:90px;height:27px;"><span style="color:#007400"><span class="k">南安普敦</span></span></div><div class="r" style="left:218px;top:503px;width:86px;height:27px;background:#efefef"></div><div class="c" style="left:218px;top:503px;width:86px;height:27px;padding-top:2px;letter-spacing:0.35px"><span style="color:#ff0000">3-2</span>(2-1)</div><div class="r" style="left:305px;top:503px;width:37px;height:27px;background:#efefef"></div><div class="c" style="left:305px;top:503px;width:37px;height:27px;padding-top:2px">5-1</div><div class="r" style="left:343px;top:503px;width:90px;height:27px;background:#efefef"></div><div class="c" style="left:343px;top:503px;width:90px;height:27px;"><span style="color:#000000"><span class="k">斯托克城</span></span></div><div class="r" style="left:434px;top:503px;width:40px;height:27px;background:#fdf9f6"></div><div class="c" style="left:434px;top:503px;width:40px;height:27px;padding-top:2px">0.94</div><div class="r" style="left:475px;top:503px;width:69px;height:27px;background:#fdf9f6"></div><div class="c" style="left:475px;top:503px;width:69px;height:27px;color:#1f4f9f"><span class="k">球半</span>/<span class="k">两</span></div><div class="r" style="left:545px;top:503px;width:40px;height:27px;background:#fdf9f6"></div><div class="c" style="left:545px;top:503px;width:40px;height:27px;padding-top:2px">0.95</div><div class="r" style="left:586px;top:503px;width:57px;height:27px;background:#f0f7fb"></div><div class="c" style="left:586px;top:503px;width:57px;height:27px;padding-top:2px">1.26</div><div class="r" style="left:644px;top:503px;width:57px;height:27px;background:#f0f7fb"></div><div class="c" style="left:644px;top:503px;width:57px;height:27px;color:#3b5ca4;padding-top:2px">5.93</div><div class="r" style="left:702px;top:503px;width:71px;height:27px;background:#f0f7fb"></div><div class="c" style="left:702px;top:503px;width:71px;height:27px;padding-top:2px">10.12</div><div class="r" style="left:774px;top:503px;width:37px;height:27px;background:#efefef"></div><div class="c" style="left:774px;top:503px;width:37px;height:27px;color:#ff0000"><span class="k">胜</span></div><div class="r" style="left:812px;top:503px;width:38px;height:27px;background:#efefef"></div><div class="c" style="left:812px;top:503px;width:38px;height:27px;color:#007400"><span class="k">输</span></div><div class="r" style="left:851px;top:503px;width:55px;height:27px;background:#efefef"></div><div class="c" style="left:851px;top:503px;width:55px;height:27px;color:#ff0000"><span class="k">大</span></div><div class="r" style="left:0px;top:531px;width:53px;height:27px;background:#ff3333"></div><div class="c" style="left:-1px;top:531px;width:54px;height:27px;color:#fff"><span class="k">英超</span></div><div class="c" style="left:54px;top:531px;width:72px;height:27px;padding-top:2px">24-10-26</div><div class="c" style="left:127px;top:531px;width:90px;height:27px;"><span style="color:#000000"><span class="k">曼彻斯特城</span></span></div><div class="c" style="left:218px;top:531px;width:86px;height:27px;padding-top:2px;letter-spacing:0.35px"><span style="color:#ff0000">1-0</span>(1-0)</div><div class="c" style="left:305px;top:531px;width:37px;height:27px;padding-top:2px">12-1</div><div class="c" style="left:343px;top:531px;width:90px;height:27px;"><span style="color:#007400"><span class="k">南安普敦</span></span></div><div class="r" style="left:434px;top:531px;width:40px;height:27px;background:#fdf9f6"></div><div class="c" style="left:434px;top:531px;width:40px;height:27px;padding-top:2px">0.94</div><div class="r" style="left:475px;top:531px;width:69px;height:27px;background:#fdf9f6"></div><div class="c" style="left:475px;top:531px;width:69px;height:27px;color:#1f4f9f"><span class="k">两球半</span></div><div class="r" style="left:545px;top:531px;width:40px;height:27px;background:#fdf9f6"></div><div class="c" style="left:545px;top:531px;width:40px;height:27px;padding-top:2px">0.95</div><div class="r" style="left:586px;top:531px;width:57px;height:27px;background:#f0f7fb"></div><div class="c" style="left:586px;top:531px;width:57px;height:27px;padding-top:2px">1.11</div><div class="r" style="left:644px;top:531px;width:57px;height:27px;background:#f0f7fb"></div><div class="c" style="left:644px;top:531px;width:57px;height:27px;color:#3b5ca4;padding-top:2px">9.87</div><div class="r" style="left:702px;top:531px;width:71px;height:27px;background:#f0f7fb"></div><div class="c" style="left:702px;top:531px;width:71px;height:27px;padding-top:2px">19.49</div><div class="c" style="left:774px;top:531px;width:37px;height:27px;color:#007400"><span class="k">负</span></div><div class="c" style="left:812px;top:531px;width:38px;height:27px;color:#ff0000"><span class="k">赢</span></div><div class="c" style="left:851px;top:531px;width:55px;height:27px;color:#007400"><span class="k">小</span></div><div class="r" style="left:0px;top:559px;width:53px;height:27px;background:#ff3333"></div><div class="c" style="left:-1px;top:559px;width:54px;height:27px;color:#fff"><span class="k">英超</span></div><div class="r" style="left:54px;top:559px;width:72px;height:27px;background:#efefef"></div><div class="c" style="left:54px;top:559px;width:72px;height:27px;padding-top:2px">24-10-19</div><div class="r" style="left:127px;top:559px;width:90px;height:27px;background:#efefef"></div><div class="c" style="left:127px;top:559px;width:90px;height:27px;"><b class="bd">1</b><span style="color:#007400"><span class="k">南安普敦</span></span></div><div class="r" style="left:218px;top:559px;width:86px;height:27px;background:#efefef"></div><div class="c" style="left:218px;top:559px;width:86px;height:27px;padding-top:2px;letter-spacing:0.35px"><span style="color:#ff0000">2-3</span>(2-0)</div><div class="r" style="left:305px;top:559px;width:37px;height:27px;background:#efefef"></div><div class="c" style="left:305px;top:559px;width:37px;height:27px;padding-top:2px">10-6</div><div class="r" style="left:343px;top:559px;width:90px;height:27px;background:#efefef"></div><div class="c" style="left:343px;top:559px;width:90px;height:27px;"><span style="color:#000000"><span class="k">莱斯特城</span></span></div><div class="r" style="left:434px;top:559px;width:40px;height:27px;background:#fdf9f6"></div><div class="c" style="left:434px;top:559px;width:40px;height:27px;padding-top:2px">0.88</div><div class="r" style="left:475px;top:559px;width:69px;height:27px;background:#fdf9f6"></div><div class="c" style="left:475px;top:559px;width:69px;height:27px;color:#1f4f9f"><span class="k">平</span>/<span class="k">半</span></div><div class="r" style="left:545px;top:559px;width:40px;height:27px;background:#fdf9f6"></div><div class="c" style="left:545px;top:559px;width:40px;height:27px;padding-top:2px">1.01</div><div class="r" style="left:586px;top:559px;width:57px;height:27px;background:#f0f7fb"></div><div class="c" style="left:586px;top:559px;width:57px;height:27px;padding-top:2px">2.17</div><div class="r" style="left:644px;top:559px;width:57px;height:27px;background:#f0f7fb"></div><div class="c" style="left:644px;top:559px;width:57px;height:27px;color:#3b5ca4;padding-top:2px">3.50</div><div class="r" style="left:702px;top:559px;width:71px;height:27px;background:#f0f7fb"></div><div class="c" style="left:702px;top:559px;width:71px;height:27px;padding-top:2px">3.26</div><div class="r" style="left:774px;top:559px;width:37px;height:27px;background:#efefef"></div><div class="c" style="left:774px;top:559px;width:37px;height:27px;color:#007400"><span class="k">负</span></div><div class="r" style="left:812px;top:559px;width:38px;height:27px;background:#efefef"></div><div class="c" style="left:812px;top:559px;width:38px;height:27px;color:#007400"><span class="k">输</span></div><div class="r" style="left:851px;top:559px;width:55px;height:27px;background:#efefef"></div><div class="c" style="left:851px;top:559px;width:55px;height:27px;color:#ff0000"><span class="k">大</span></div><div class="r" style="left:0px;top:587px;width:53px;height:27px;background:#ff3333"></div><div class="c" style="left:-1px;top:587px;width:54px;height:27px;color:#fff"><span class="k">英超</span></div><div class="c" style="left:54px;top:587px;width:72px;height:27px;padding-top:2px">24-10-05</div><div class="c" style="left:127px;top:587px;width:90px;height:27px;"><span style="color:#000000"><span class="k">阿森纳</span></span></div><div class="c" style="left:218px;top:587px;width:86px;height:27px;padding-top:2px;letter-spacing:0.35px"><span style="color:#ff0000">3-1</span>(0-0)</div><div class="c" style="left:305px;top:587px;width:37px;height:27px;padding-top:2px">13-1</div><div class="c" style="left:343px;top:587px;width:90px;height:27px;"><span style="color:#007400"><span class="k">南安普敦</span></span></div><div class="r" style="left:434px;top:587px;width:40px;height:27px;background:#fdf9f6"></div><div class="c" style="left:434px;top:587px;width:40px;height:27px;padding-top:2px">0.89</div><div class="r" style="left:475px;top:587px;width:69px;height:27px;background:#fdf9f6"></div><div class="c" style="left:475px;top:587px;width:69px;height:27px;color:#1f4f9f"><span class="k">两球</span></div><div class="r" style="left:545px;top:587px;width:40px;height:27px;background:#fdf9f6"></div><div class="c" style="left:545px;top:587px;width:40px;height:27px;padding-top:2px">1.00</div><div class="r" style="left:586px;top:587px;width:57px;height:27px;background:#f0f7fb"></div><div class="c" style="left:586px;top:587px;width:57px;height:27px;padding-top:2px">1.16</div><div class="r" style="left:644px;top:587px;width:57px;height:27px;background:#f0f7fb"></div><div class="c" style="left:644px;top:587px;width:57px;height:27px;color:#3b5ca4;padding-top:2px">7.85</div><div class="r" style="left:702px;top:587px;width:71px;height:27px;background:#f0f7fb"></div><div class="c" style="left:702px;top:587px;width:71px;height:27px;padding-top:2px">15.40</div><div class="c" style="left:774px;top:587px;width:37px;height:27px;color:#007400"><span class="k">负</span></div><div class="c" style="left:812px;top:587px;width:38px;height:27px;color:#0000ff"><span class="k">走</span></div><div class="c" style="left:851px;top:587px;width:55px;height:27px;color:#ff0000"><span class="k">大</span></div><div class="r" style="left:0px;top:615px;width:53px;height:27px;background:#ff3333"></div><div class="c" style="left:-1px;top:615px;width:54px;height:27px;color:#fff"><span class="k">英超</span></div><div class="r" style="left:54px;top:615px;width:72px;height:27px;background:#efefef"></div><div class="c" style="left:54px;top:615px;width:72px;height:27px;padding-top:2px">24-10-01</div><div class="r" style="left:127px;top:615px;width:90px;height:27px;background:#efefef"></div><div class="c" style="left:127px;top:615px;width:90px;height:27px;"><span style="color:#000000"><span class="k">伯恩茅斯</span></span></div><div class="r" style="left:218px;top:615px;width:86px;height:27px;background:#efefef"></div><div class="c" style="left:218px;top:615px;width:86px;height:27px;padding-top:2px;letter-spacing:0.35px"><span style="color:#ff0000">3-1</span>(3-0)</div><div class="r" style="left:305px;top:615px;width:37px;height:27px;background:#efefef"></div><div class="c" style="left:305px;top:615px;width:37px;height:27px;padding-top:2px">7-4</div><div class="r" style="left:343px;top:615px;width:90px;height:27px;background:#efefef"></div><div class="c" style="left:343px;top:615px;width:90px;height:27px;"><span style="color:#007400"><span class="k">南安普敦</span></span></div><div class="r" style="left:434px;top:615px;width:40px;height:27px;background:#fdf9f6"></div><div class="c" style="left:434px;top:615px;width:40px;height:27px;padding-top:2px">0.83</div><div class="r" style="left:475px;top:615px;width:69px;height:27px;background:#fdf9f6"></div><div class="c" style="left:475px;top:615px;width:69px;height:27px;color:#1f4f9f"><span class="k">一球</span></div><div class="r" style="left:545px;top:615px;width:40px;height:27px;background:#fdf9f6"></div><div class="c" style="left:545px;top:615px;width:40px;height:27px;padding-top:2px">1.06</div><div class="r" style="left:586px;top:615px;width:57px;height:27px;background:#f0f7fb"></div><div class="c" style="left:586px;top:615px;width:57px;height:27px;padding-top:2px">1.53</div><div class="r" style="left:644px;top:615px;width:57px;height:27px;background:#f0f7fb"></div><div class="c" style="left:644px;top:615px;width:57px;height:27px;color:#3b5ca4;padding-top:2px">4.48</div><div class="r" style="left:702px;top:615px;width:71px;height:27px;background:#f0f7fb"></div><div class="c" style="left:702px;top:615px;width:71px;height:27px;padding-top:2px">5.68</div><div class="r" style="left:774px;top:615px;width:37px;height:27px;background:#efefef"></div><div class="c" style="left:774px;top:615px;width:37px;height:27px;color:#007400"><span class="k">负</span></div><div class="r" style="left:812px;top:615px;width:38px;height:27px;background:#efefef"></div><div class="c" style="left:812px;top:615px;width:38px;height:27px;color:#007400"><span class="k">输</span></div><div class="r" style="left:851px;top:615px;width:55px;height:27px;background:#efefef"></div><div class="c" style="left:851px;top:615px;width:55px;height:27px;color:#ff0000"><span class="k">大</span></div><div class="r" style="left:0px;top:643px;width:53px;height:27px;background:#ff3333"></div><div class="c" style="left:-1px;top:643px;width:54px;height:27px;color:#fff"><span class="k">英超</span></div><div class="c" style="left:54px;top:643px;width:72px;height:27px;padding-top:2px">24-09-21</div><div class="c" style="left:127px;top:643px;width:90px;height:27px;"><span style="color:#007400"><span class="k">南安普敦</span></span></div><div class="c" style="left:218px;top:643px;width:86px;height:27px;padding-top:2px;letter-spacing:0.35px"><span style="color:#ff0000">1-1</span>(1-0)</div><div class="c" style="left:305px;top:643px;width:37px;height:27px;padding-top:2px">2-10</div><div class="c" style="left:343px;top:643px;width:90px;height:27px;"><span style="color:#000000"><span class="k">伊普斯维奇</span></span></div><div class="r" style="left:434px;top:643px;width:40px;height:27px;background:#fdf9f6"></div><div class="c" style="left:434px;top:643px;width:40px;height:27px;padding-top:2px">1.11</div><div class="r" style="left:475px;top:643px;width:69px;height:27px;background:#fdf9f6"></div><div class="c" style="left:475px;top:643px;width:69px;height:27px;color:#1f4f9f"><span class="k">平</span>/<span class="k">半</span></div><div class="r" style="left:545px;top:643px;width:40px;height:27px;background:#fdf9f6"></div><div class="c" style="left:545px;top:643px;width:40px;height:27px;padding-top:2px">0.79</div><div class="r" style="left:586px;top:643px;width:57px;height:27px;background:#f0f7fb"></div><div class="c" style="left:586px;top:643px;width:57px;height:27px;padding-top:2px">2.32</div><div class="r" style="left:644px;top:643px;width:57px;height:27px;background:#f0f7fb"></div><div class="c" style="left:644px;top:643px;width:57px;height:27px;color:#3b5ca4;padding-top:2px">3.43</div><div class="r" style="left:702px;top:643px;width:71px;height:27px;background:#f0f7fb"></div><div class="c" style="left:702px;top:643px;width:71px;height:27px;padding-top:2px">3.04</div><div class="c" style="left:774px;top:643px;width:37px;height:27px;color:#0000ff"><span class="k">平</span></div><div class="c" style="left:812px;top:643px;width:38px;height:27px;color:#007400"><span class="k">输</span></div><div class="c" style="left:851px;top:643px;width:55px;height:27px;color:#007400"><span class="k">小</span></div><div class="r" style="left:0px;top:671px;width:53px;height:27px;background:#808080"></div><div class="c" style="left:-1px;top:671px;width:54px;height:27px;color:#fff"><span class="k">英联杯</span></div><div class="r" style="left:54px;top:671px;width:72px;height:27px;background:#efefef"></div><div class="c" style="left:54px;top:671px;width:72px;height:27px;padding-top:2px">24-09-18</div><div class="r" style="left:127px;top:671px;width:90px;height:27px;background:#efefef"></div><div class="c" style="left:127px;top:671px;width:90px;height:27px;"><span style="color:#000000"><span class="k">埃弗顿</span></span></div><div class="r" style="left:218px;top:671px;width:86px;height:27px;background:#efefef"></div><div class="c" style="left:218px;top:671px;width:86px;height:27px;padding-top:2px;letter-spacing:0.35px"><span style="color:#ff0000">1-1</span>(1-1)</div><div class="r" style="left:305px;top:671px;width:37px;height:27px;background:#efefef"></div><div class="c" style="left:305px;top:671px;width:37px;height:27px;padding-top:2px">9-4</div><div class="r" style="left:343px;top:671px;width:90px;height:27px;background:#efefef"></div><div class="c" style="left:343px;top:671px;width:90px;height:27px;"><span style="color:#007400"><span class="k">南安普敦</span></span></div><div class="r" style="left:434px;top:671px;width:40px;height:27px;background:#fdf9f6"></div><div class="c" style="left:434px;top:671px;width:40px;height:27px;padding-top:2px">0.93</div><div class="r" style="left:475px;top:671px;width:69px;height:27px;background:#fdf9f6"></div><div class="c" style="left:475px;top:671px;width:69px;height:27px;color:#1f4f9f"><span class="k">平</span>/<span class="k">半</span></div><div class="r" style="left:545px;top:671px;width:40px;height:27px;background:#fdf9f6"></div><div class="c" style="left:545px;top:671px;width:40px;height:27px;padding-top:2px">0.96</div><div class="r" style="left:586px;top:671px;width:57px;height:27px;background:#f0f7fb"></div><div class="c" style="left:586px;top:671px;width:57px;height:27px;padding-top:2px">2.16</div><div class="r" style="left:644px;top:671px;width:57px;height:27px;background:#f0f7fb"></div><div class="c" style="left:644px;top:671px;width:57px;height:27px;color:#3b5ca4;padding-top:2px">3.50</div><div class="r" style="left:702px;top:671px;width:71px;height:27px;background:#f0f7fb"></div><div class="c" style="left:702px;top:671px;width:71px;height:27px;padding-top:2px">3.15</div><div class="r" style="left:774px;top:671px;width:37px;height:27px;background:#efefef"></div><div class="c" style="left:774px;top:671px;width:37px;height:27px;color:#0000ff"><span class="k">平</span></div><div class="r" style="left:812px;top:671px;width:38px;height:27px;background:#efefef"></div><div class="c" style="left:812px;top:671px;width:38px;height:27px;color:#ff0000"><span class="k">赢</span></div><div class="r" style="left:851px;top:671px;width:55px;height:27px;background:#efefef"></div><div class="c" style="left:851px;top:671px;width:55px;height:27px;color:#007400"><span class="k">小</span></div><div class="r" style="left:0px;top:699px;width:53px;height:27px;background:#ff3333"></div><div class="c" style="left:-1px;top:699px;width:54px;height:27px;color:#fff"><span class="k">英超</span></div><div class="c" style="left:54px;top:699px;width:72px;height:27px;padding-top:2px">24-09-14</div><div class="c" style="left:127px;top:699px;width:90px;height:27px;"><b class="bd">1</b><span style="color:#007400"><span class="k">南安普敦</span></span></div><div class="c" style="left:218px;top:699px;width:86px;height:27px;padding-top:2px;letter-spacing:0.35px"><span style="color:#ff0000">0-3</span>(0-2)</div><div class="c" style="left:305px;top:699px;width:37px;height:27px;padding-top:2px">0-7</div><div class="c" style="left:343px;top:699px;width:90px;height:27px;"><span style="color:#000000"><span class="k">曼彻斯特联</span></span></div><div class="r" style="left:434px;top:699px;width:40px;height:27px;background:#fdf9f6"></div><div class="c" style="left:434px;top:699px;width:40px;height:27px;padding-top:2px">0.82</div><div class="r" style="left:475px;top:699px;width:69px;height:27px;background:#fdf9f6"></div><div class="c" style="left:475px;top:699px;width:69px;height:27px;color:#1f4f9f"><span class="star">*</span><span class="k">半</span>/<span class="k">一</span></div><div class="r" style="left:545px;top:699px;width:40px;height:27px;background:#fdf9f6"></div><div class="c" style="left:545px;top:699px;width:40px;height:27px;padding-top:2px">1.07</div><div class="r" style="left:586px;top:699px;width:57px;height:27px;background:#f0f7fb"></div><div class="c" style="left:586px;top:699px;width:57px;height:27px;padding-top:2px">4.33</div><div class="r" style="left:644px;top:699px;width:57px;height:27px;background:#f0f7fb"></div><div class="c" style="left:644px;top:699px;width:57px;height:27px;color:#3b5ca4;padding-top:2px">4.01</div><div class="r" style="left:702px;top:699px;width:71px;height:27px;background:#f0f7fb"></div><div class="c" style="left:702px;top:699px;width:71px;height:27px;padding-top:2px">1.75</div><div class="c" style="left:774px;top:699px;width:37px;height:27px;color:#007400"><span class="k">负</span></div><div class="c" style="left:812px;top:699px;width:38px;height:27px;color:#007400"><span class="k">输</span></div><div class="c" style="left:851px;top:699px;width:55px;height:27px;color:#0000ff"><span class="k">走</span></div><div class="r" style="left:0px;top:727px;width:53px;height:27px;background:#ff3333"></div><div class="c" style="left:-1px;top:727px;width:54px;height:27px;color:#fff"><span class="k">英超</span></div><div class="r" style="left:54px;top:727px;width:72px;height:27px;background:#efefef"></div><div class="c" style="left:54px;top:727px;width:72px;height:27px;padding-top:2px">24-08-31</div><div class="r" style="left:127px;top:727px;width:90px;height:27px;background:#efefef"></div><div class="c" style="left:127px;top:727px;width:90px;height:27px;"><span style="color:#000000"><span class="k">布伦特福德</span></span></div><div class="r" style="left:218px;top:727px;width:86px;height:27px;background:#efefef"></div><div class="c" style="left:218px;top:727px;width:86px;height:27px;padding-top:2px;letter-spacing:0.35px"><span style="color:#ff0000">3-1</span>(1-0)</div><div class="r" style="left:305px;top:727px;width:37px;height:27px;background:#efefef"></div><div class="c" style="left:305px;top:727px;width:37px;height:27px;padding-top:2px">2-8</div><div class="r" style="left:343px;top:727px;width:90px;height:27px;background:#efefef"></div><div class="c" style="left:343px;top:727px;width:90px;height:27px;"><span style="color:#007400"><span class="k">南安普敦</span></span></div><div class="r" style="left:434px;top:727px;width:40px;height:27px;background:#fdf9f6"></div><div class="c" style="left:434px;top:727px;width:40px;height:27px;padding-top:2px">1.05</div><div class="r" style="left:475px;top:727px;width:69px;height:27px;background:#fdf9f6"></div><div class="c" style="left:475px;top:727px;width:69px;height:27px;color:#1f4f9f"><span class="k">半</span>/<span class="k">一</span></div><div class="r" style="left:545px;top:727px;width:40px;height:27px;background:#fdf9f6"></div><div class="c" style="left:545px;top:727px;width:40px;height:27px;padding-top:2px">0.84</div><div class="r" style="left:586px;top:727px;width:57px;height:27px;background:#f0f7fb"></div><div class="c" style="left:586px;top:727px;width:57px;height:27px;padding-top:2px">1.78</div><div class="r" style="left:644px;top:727px;width:57px;height:27px;background:#f0f7fb"></div><div class="c" style="left:644px;top:727px;width:57px;height:27px;color:#3b5ca4;padding-top:2px">3.81</div><div class="r" style="left:702px;top:727px;width:71px;height:27px;background:#f0f7fb"></div><div class="c" style="left:702px;top:727px;width:71px;height:27px;padding-top:2px">4.37</div><div class="r" style="left:774px;top:727px;width:37px;height:27px;background:#efefef"></div><div class="c" style="left:774px;top:727px;width:37px;height:27px;color:#007400"><span class="k">负</span></div><div class="r" style="left:812px;top:727px;width:38px;height:27px;background:#efefef"></div><div class="c" style="left:812px;top:727px;width:38px;height:27px;color:#007400"><span class="k">输</span></div><div class="r" style="left:851px;top:727px;width:55px;height:27px;background:#efefef"></div><div class="c" style="left:851px;top:727px;width:55px;height:27px;color:#ff0000"><span class="k">大</span></div><div class="r" style="left:0px;top:433px;width:907px;height:1px;background:#c0c0c0"></div><div class="r" style="left:433px;top:456px;width:474px;height:1px;background:#c0c0c0"></div><div class="r" style="left:0px;top:474px;width:907px;height:1px;background:#c0c0c0"></div><div class="r" style="left:0px;top:502px;width:907px;height:1px;background:#c0c0c0"></div><div class="r" style="left:0px;top:530px;width:907px;height:1px;background:#c0c0c0"></div><div class="r" style="left:0px;top:558px;width:907px;height:1px;background:#c0c0c0"></div><div class="r" style="left:0px;top:586px;width:907px;height:1px;background:#c0c0c0"></div><div class="r" style="left:0px;top:614px;width:907px;height:1px;background:#c0c0c0"></div><div class="r" style="left:0px;top:642px;width:907px;height:1px;background:#c0c0c0"></div><div class="r" style="left:0px;top:670px;width:907px;height:1px;background:#c0c0c0"></div><div class="r" style="left:0px;top:698px;width:907px;height:1px;background:#c0c0c0"></div><div class="r" style="left:0px;top:726px;width:907px;height:1px;background:#c0c0c0"></div><div class="r" style="left:0px;top:754px;width:907px;height:1px;background:#c0c0c0"></div><div class="r" style="left:53px;top:433px;width:1px;height:321px;background:#c0c0c0"></div><div class="r" style="left:126px;top:433px;width:1px;height:321px;background:#c0c0c0"></div><div class="r" style="left:217px;top:433px;width:1px;height:321px;background:#c0c0c0"></div><div class="r" style="left:304px;top:433px;width:1px;height:321px;background:#c0c0c0"></div><div class="r" style="left:342px;top:433px;width:1px;height:321px;background:#c0c0c0"></div><div class="r" style="left:433px;top:433px;width:1px;height:321px;background:#c0c0c0"></div><div class="r" style="left:474px;top:433px;width:1px;height:321px;background:#c0c0c0"></div><div class="r" style="left:544px;top:433px;width:1px;height:321px;background:#c0c0c0"></div><div class="r" style="left:585px;top:433px;width:1px;height:321px;background:#c0c0c0"></div><div class="r" style="left:643px;top:433px;width:1px;height:321px;background:#c0c0c0"></div><div class="r" style="left:701px;top:433px;width:1px;height:321px;background:#c0c0c0"></div><div class="r" style="left:773px;top:433px;width:1px;height:321px;background:#c0c0c0"></div><div class="r" style="left:811px;top:433px;width:1px;height:321px;background:#c0c0c0"></div><div class="r" style="left:850px;top:433px;width:1px;height:321px;background:#c0c0c0"></div><div class="r" style="left:906px;top:433px;width:1px;height:349px;background:#c0c0c0"></div><div class="r" style="left:0px;top:782px;width:907px;height:1px;background:#c0c0c0"></div><div class="r" style="left:474px;top:434px;width:1px;height:22px;background:#dde4ed"></div><div class="r" style="left:544px;top:434px;width:1px;height:22px;background:#dde4ed"></div><div class="r" style="left:643px;top:434px;width:1px;height:22px;background:#dde4ed"></div><div class="r" style="left:701px;top:434px;width:1px;height:22px;background:#dde4ed"></div><div class="r" style="left:811px;top:434px;width:1px;height:22px;background:#dde4ed"></div><div class="r" style="left:850px;top:434px;width:1px;height:22px;background:#dde4ed"></div><div class="sel" style="left:458px;top:435px;width:60px;height:20px"><span style="font-size:13px">Crow*</span><svg class="chev" width="10" height="7" viewBox="0 0 10 7"><path d="M1.1 2.2 L5.1 6 L9.4 1.7" fill="none" stroke="#000" stroke-width="2.1"/></svg></div><div class="sel" style="left:525px;top:435px;width:36px;height:20px"><span style="font-size:12px"><span class="k">终</span></span><svg class="chev" width="10" height="7" viewBox="0 0 10 7"><path d="M1.1 2.2 L5.1 6 L9.4 1.7" fill="none" stroke="#000" stroke-width="2.1"/></svg></div><div class="sel" style="left:616px;top:435px;width:84px;height:20px"><span style="font-size:12px"><span class="k">胜平负均值</span></span><svg class="chev" width="10" height="7" viewBox="0 0 10 7"><path d="M1.1 2.2 L5.1 6 L9.4 1.7" fill="none" stroke="#000" stroke-width="2.1"/></svg></div><div class="sel" style="left:707px;top:435px;width:36px;height:20px"><span style="font-size:12px"><span class="k">终</span></span><svg class="chev" width="10" height="7" viewBox="0 0 10 7"><path d="M1.1 2.2 L5.1 6 L9.4 1.7" fill="none" stroke="#000" stroke-width="2.1"/></svg></div><div class="sel" style="left:816px;top:435px;width:48px;height:20px"><span style="font-size:12px"><span class="k">全场</span></span><svg class="chev" width="10" height="7" viewBox="0 0 10 7"><path d="M1.1 2.2 L5.1 6 L9.4 1.7" fill="none" stroke="#000" stroke-width="2.1"/></svg></div><div class="sum " style="left:283.9px;top:755px"><span class="k">近</span></div><div class="sum rd" style="left:296.5px;top:755px">10</div><div class="sum " style="left:309.3px;top:755px"><span class="k">场</span>,<span class="k">胜</span></div><div class="sum " style="left:336.7px;top:755px">2</div><div class="sum " style="left:342.9px;top:755px"><span class="k">平</span></div><div class="sum " style="left:355.4px;top:755px">2</div><div class="sum " style="left:361.1px;top:755px"><span class="k">负</span></div><div class="sum " style="left:373.1px;top:755px">6,</div><div class="sum " style="left:388.2px;top:755px"><span class="k">胜率</span>:</div><div class="gb" style="left:416px;top:759px">20%</div><div class="sum " style="left:454.4px;top:755px"><span class="k">赢率</span>:</div><div class="gb" style="left:483px;top:759px">30%</div><div class="sum " style="left:521.2px;top:755px"><span class="k">大</span>:</div><div class="sum bl" style="left:537.7px;top:755px">50%</div><div class="sum " style="left:566.5px;top:755px"><span class="k">单率</span>:</div><div class="sum bl" style="left:594.5px;top:755px">50%</div></body></html>
